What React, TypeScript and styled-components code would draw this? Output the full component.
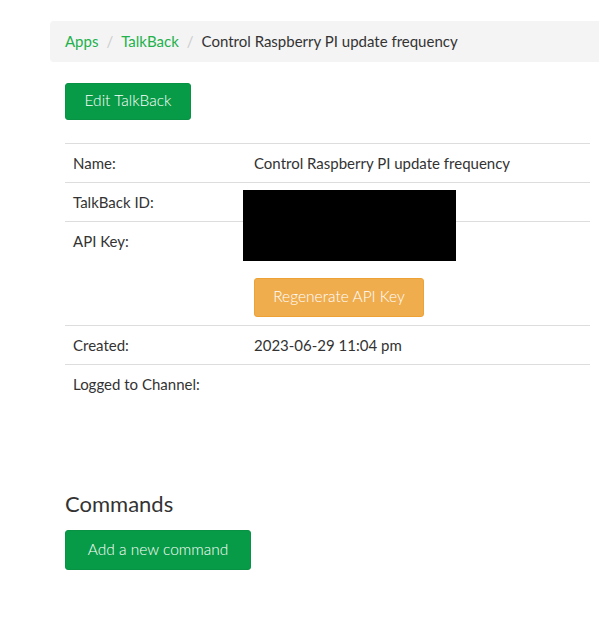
import React from "react";
import styled, { createGlobalStyle } from "styled-components";

const Global = createGlobalStyle`
  html, body { margin: 0; padding: 0; background: #fff; }
  body {
    font-family: "Lato", "Liberation Sans", sans-serif;
    font-size: 15px;
    color: #333;
    overflow: hidden;
  }
`;

const Page = styled.div`
  padding: 21px 0 0 50px;
`;

const Breadcrumb = styled.ol`
  list-style: none;
  margin: 0 -20px 0 0;
  padding: 8px 15px;
  height: 25px;
  line-height: 25px;
  background: #f4f4f4;
  border-radius: 4px;
  display: flex;
  align-items: center;
  & > li + li::before {
    content: "/";
    color: #ccc;
    padding: 0 8px;
  }
`;

const Crumb = styled.li<{ $active?: boolean }>`
  color: ${(p) => (p.$active ? "#333" : "#22b14c")};
`;

const Content = styled.div`
  padding: 21px 9px 0 15px;
`;

const Button = styled.button<{ $variant?: "green" | "orange"; $w: number; $h: number }>`
  display: inline-flex;
  align-items: center;
  justify-content: center;
  box-sizing: border-box;
  width: ${(p) => p.$w}px;
  height: ${(p) => p.$h}px;
  padding: 0 0 3px;
  font-family: "Lato", "Liberation Sans", sans-serif;
  font-weight: 300;
  font-size: 15.5px;
  color: #fff;
  border-radius: 3px;
  cursor: pointer;
  background: ${(p) => (p.$variant === "orange" ? "#f0ad4e" : "#089b47")};
  border: 1px solid ${(p) => (p.$variant === "orange" ? "#eea236" : "#079244")};
`;

const TableWrap = styled.div`
  position: relative;
  margin-top: 23px;
`;

const Table = styled.table`
  width: 100%;
  border-collapse: collapse;
  table-layout: fixed;
`;

const Row = styled.tr`
  border-top: 1px solid #ddd;
`;

const Label = styled.td`
  width: 165px;
  padding: 8px;
  line-height: 22px;
  vertical-align: top;
`;

const Value = styled.td`
  padding: 8px;
  line-height: 22px;
  vertical-align: top;
`;

const Hidden = styled.div`
  height: 22px;
`;

const RegenWrap = styled.div`
  margin-top: 26px;
`;

const Redaction = styled.div`
  position: absolute;
  left: 178px;
  top: 47px;
  width: 213px;
  height: 71px;
  background: #000;
`;

const Heading = styled.h3`
  margin: 89px 0 14px;
  font-family: "Lato", "Liberation Sans", sans-serif;
  font-weight: 400;
  font-size: 22px;
  line-height: 24px;
  color: #333;
`;

export default function App() {
  return (
    <>
      <Global />
      <Page>
        <Breadcrumb>
          <Crumb>Apps</Crumb>
          <Crumb>TalkBack</Crumb>
          <Crumb $active>Control Raspberry PI update frequency</Crumb>
        </Breadcrumb>
        <Content>
          <Button $w={126} $h={37}>Edit TalkBack</Button>
          <TableWrap>
            <Table>
              <tbody>
                <Row>
                  <Label>Name:</Label>
                  <Value>Control Raspberry PI update frequency</Value>
                </Row>
                <Row>
                  <Label>TalkBack ID:</Label>
                  <Value><Hidden /></Value>
                </Row>
                <Row>
                  <Label>API Key:</Label>
                  <Value>
                    <Hidden />
                    <RegenWrap>
                      <Button $variant="orange" $w={170} $h={39}>Regenerate API Key</Button>
                    </RegenWrap>
                  </Value>
                </Row>
                <Row>
                  <Label>Created:</Label>
                  <Value>2023-06-29 11:04 pm</Value>
                </Row>
                <Row>
                  <Label>Logged to Channel:</Label>
                  <Value></Value>
                </Row>
              </tbody>
            </Table>
            <Redaction />
          </TableWrap>
          <Heading>Commands</Heading>
          <Button $w={186} $h={40}>Add a new command</Button>
        </Content>
      </Page>
    </>
  );
}
